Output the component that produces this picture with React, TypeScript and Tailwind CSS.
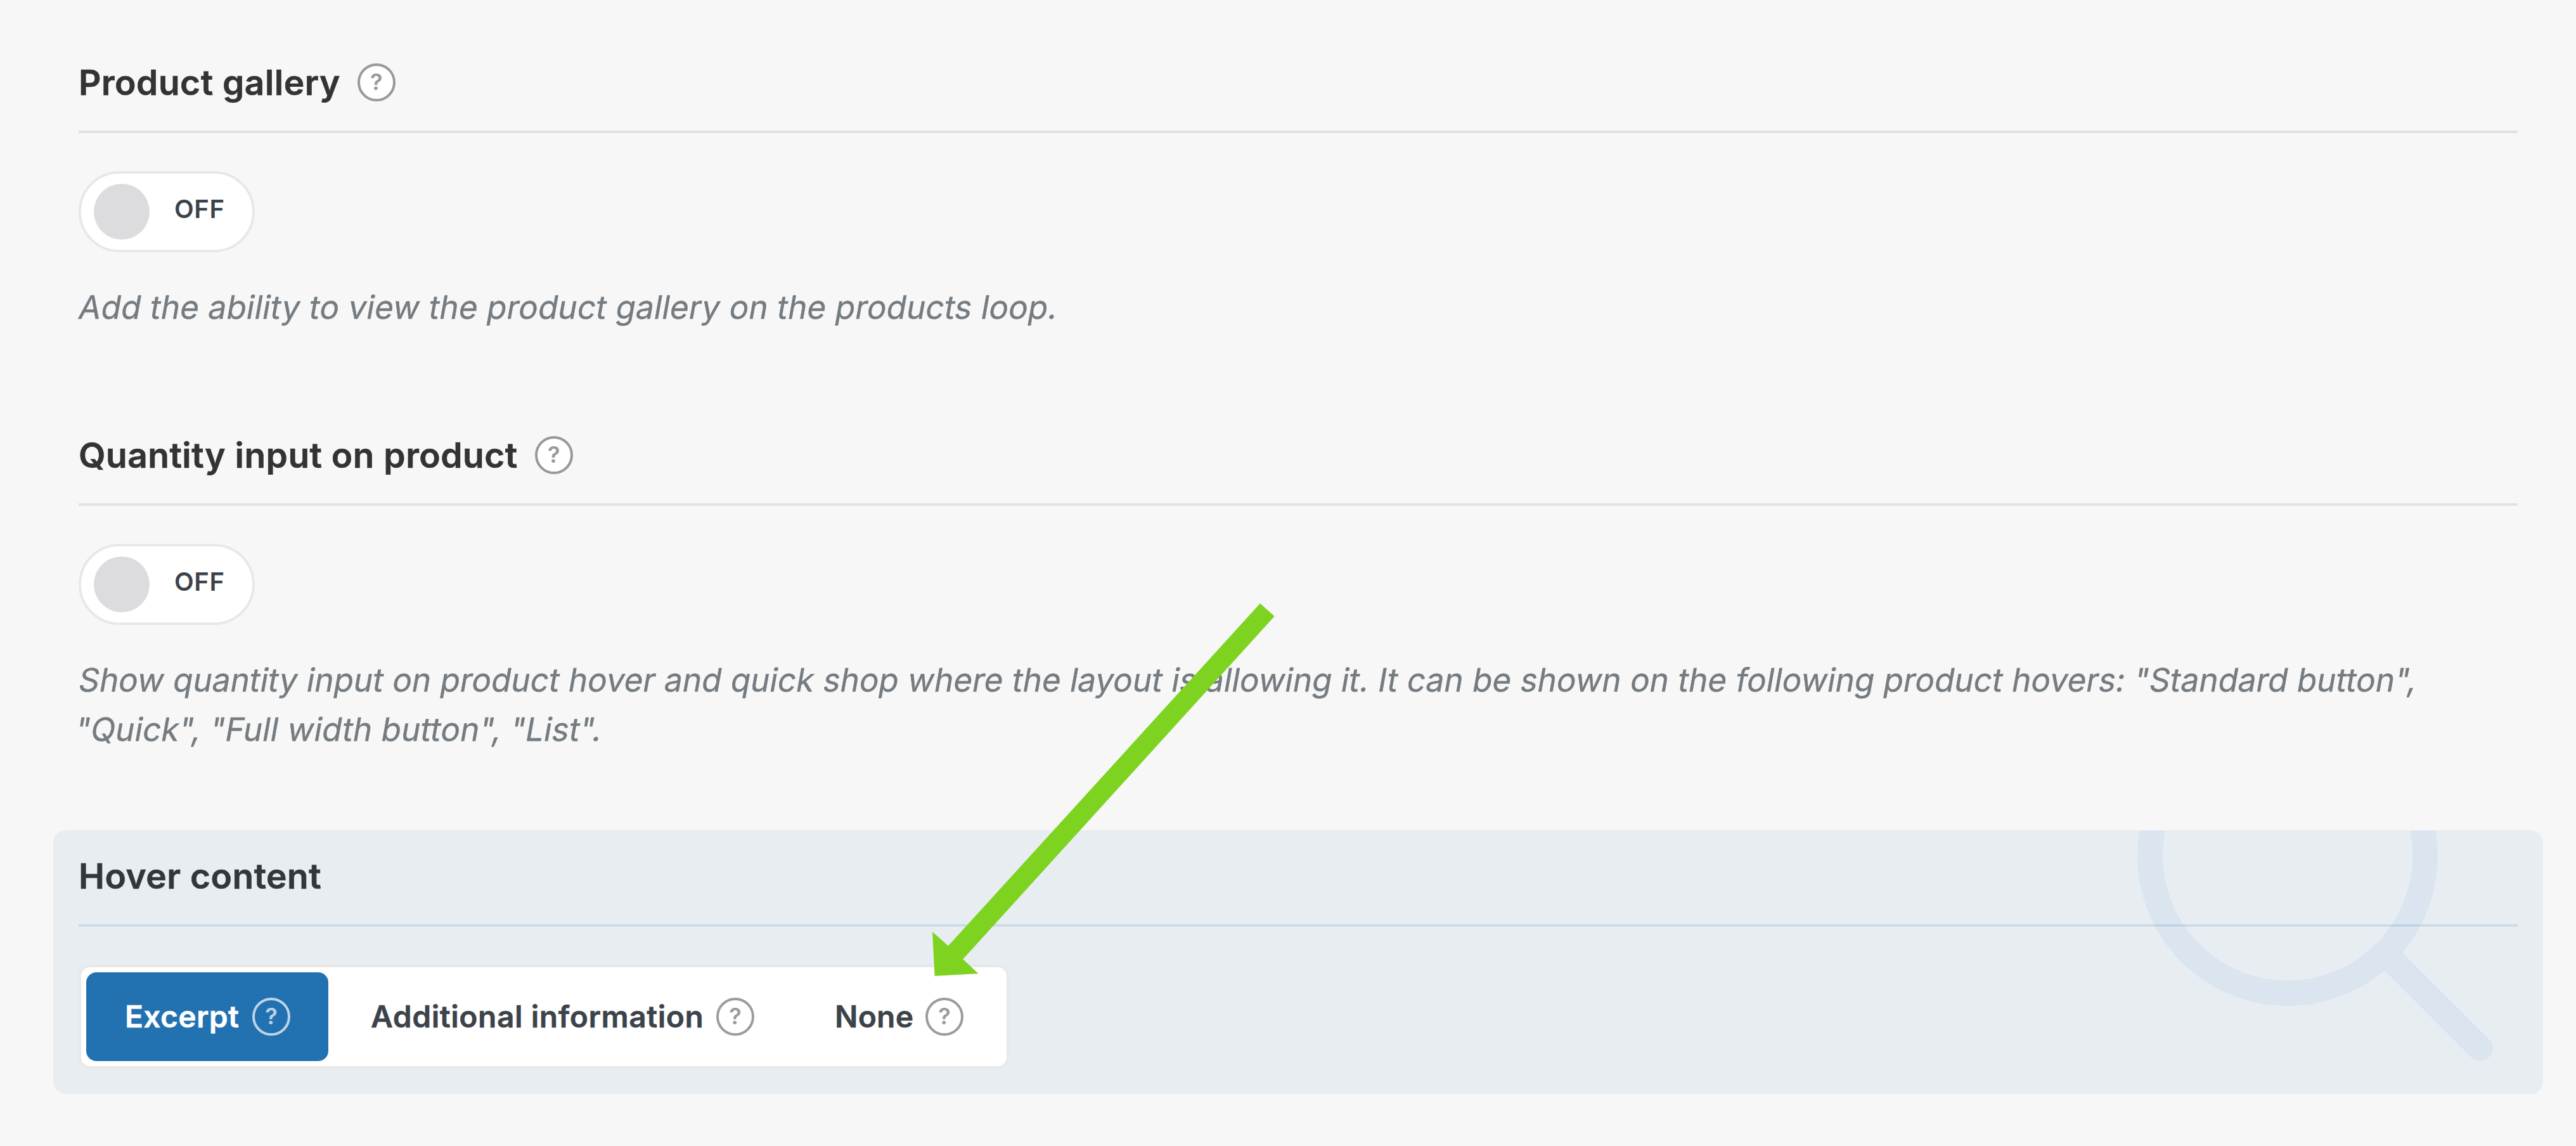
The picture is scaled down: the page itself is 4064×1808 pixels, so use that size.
type Tone = "filled" | "plain" | "light";

const toneClasses: Record<Tone, string> = {
  filled: "border-[#999999] bg-white text-[#999999]",
  plain: "border-[#9c9c9c] text-[#9c9c9c]",
  light: "border-white/70 text-white/70",
};

function Help({ tone = "filled", className = "" }: { tone?: Tone; className?: string }) {
  return (
    <span
      className={`flex size-[60px] shrink-0 items-center justify-center rounded-full border-4 pb-0.5 text-[36px] leading-none font-semibold ${toneClasses[tone]} ${className}`}
    >
      ?
    </span>
  );
}

function Toggle() {
  return (
    <button
      type="button"
      className="mt-[60px] flex h-32 w-[278px] items-center rounded-full border-4 border-[#e8e8e8] bg-white pl-5"
    >
      <span className="size-[88px] rounded-full bg-[#dcdcde]" />
      <span className="mb-[9px] ml-[39px] text-[40px] leading-none font-semibold tracking-[0.6px] text-[#3c434a]">
        OFF
      </span>
    </button>
  );
}

function Heading({ title, help = true }: { title: string; help?: boolean }) {
  return (
    <div className="flex h-[60px] items-center">
      <h3 className="text-[55px] leading-none font-semibold tracking-[0.5px] whitespace-nowrap [-webkit-text-stroke:0.6px]">
        {title}
      </h3>
      {help && <Help className="ml-[27px]" />}
    </div>
  );
}

function Magnifier() {
  return (
    <svg
      className="absolute top-0 right-0 h-[416px] w-[712px]"
      viewBox="3300 1310 712 416"
      fill="none"
      stroke="#dbe5ef"
      strokeWidth="40"
      strokeLinecap="round"
    >
      <circle cx="3609" cy="1350" r="217" />
      <path d="M3763 1504 L3912.5 1653.5" />
    </svg>
  );
}

function Arrow() {
  return (
    <svg className="absolute top-[952px] left-[1471px] h-[588px] w-[540px]" viewBox="1471 952 540 588">
      <polygon
        fill="#7ed321"
        points="1988,952 2010.7,972.3 1519.2,1513.3 1543.5,1536 1474.6,1539.7 1471,1470 1496,1492.3"
      />
    </svg>
  );
}

export default function App() {
  return (
    <main className="relative h-[1808px] w-[4064px] overflow-hidden bg-[#f7f7f7] pt-[100px] font-['Inter',sans-serif] text-[#333333]">
      <section className="mr-[92px] ml-[124px] h-[588px]">
        <Heading title="Product gallery" />
        <div className="mt-[46px] h-1 bg-[#e2e2e2]" />
        <Toggle />
        <p className="mt-12 text-[51px] leading-[78px] whitespace-nowrap text-[#757c81] [-webkit-text-stroke:0.4px]">
          <span className="ml-px block -skew-x-[10deg] tracking-[0.2px]">
            Add the ability to view the product gallery on the products loop.
          </span>
        </p>
      </section>

      <section className="mr-[92px] ml-[124px] h-[622px]">
        <Heading title="Quantity input on product" />
        <div className="mt-[46px] h-1 bg-[#e2e2e2]" />
        <Toggle />
        <p className="mt-12 text-[51px] leading-[78px] whitespace-nowrap text-[#757c81] [-webkit-text-stroke:0.4px]">
          <span className="ml-px block -skew-x-[10deg] tracking-[0.085px]">
            Show quantity input on product hover and quick shop where the layout is allowing it. It can be shown on the
            following product hovers: "Standard button",
          </span>
          <span className="-ml-1 block -skew-x-[10deg] tracking-[0.14px]">
            "Quick", "Full width button", "List".
          </span>
        </p>
      </section>

      <section className="relative mr-[52px] ml-[84px] h-[416px] overflow-hidden rounded-[20px] bg-[#e8edf1] px-10 pt-[42px] text-[#32373c]">
        <Magnifier />
        <div className="relative">
          <Heading title="Hover content" help={false} />
          <div className="mt-[46px] h-1 bg-[#2271b1]/14" />
          <div className="mt-[60px] flex h-[164px] w-[1468px] items-center gap-1.5 rounded-[18px] border-4 border-[#e8e8e8] bg-white px-2 text-[48px] leading-none font-semibold whitespace-nowrap text-[#3c434a]">
            <button
              type="button"
              className="flex h-[140px] w-[382px] items-center justify-between rounded-2xl bg-[#2271b1] px-[60px] text-white"
            >
              <span className="ml-px tracking-[0.3px] [-webkit-text-stroke:0.5px]">Excerpt</span>
              <Help tone="light" />
            </button>
            <button type="button" className="flex h-[140px] w-[726px] items-center justify-between px-[60px]">
              <span className="ml-px tracking-[0.52px] [-webkit-text-stroke:0.5px]">Additional information</span>
              <Help tone="plain" />
            </button>
            <button type="button" className="flex h-[140px] w-[324px] items-center justify-between px-[60px]">
              <span className="ml-px tracking-[0.2px] [-webkit-text-stroke:0.5px]">None</span>
              <Help tone="plain" />
            </button>
          </div>
        </div>
      </section>

      <Arrow />
    </main>
  );
}
